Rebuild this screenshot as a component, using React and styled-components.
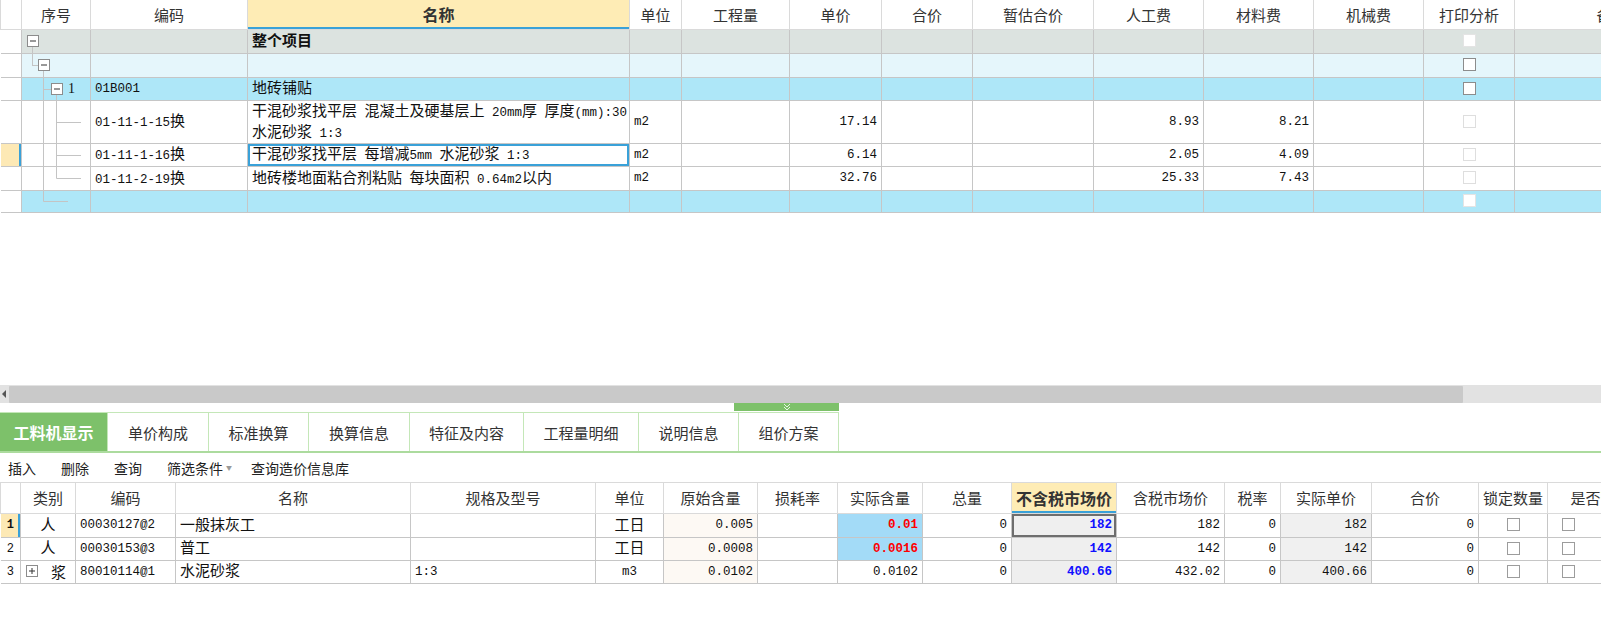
import React from 'react';
import styled, { createGlobalStyle, css } from 'styled-components';

const GlobalStyle = createGlobalStyle`
  html, body { margin: 0; padding: 0; background: #fff; overflow: hidden; }
  body { font-family: "Noto Sans CJK SC", "Liberation Sans", sans-serif; color: #222; }
`;

const Page = styled.div`
  width: 1601px;
  height: 641px;
  display: flex;
  flex-direction: column;
  overflow: hidden;
`;

const TopPane = styled.div`
  height: 385px;
  overflow: hidden;
`;

const Grid = styled.table`
  table-layout: fixed;
  border-collapse: collapse;
  width: ${(p) => p.$w}px;
  font-family: "Liberation Mono", "Noto Sans CJK SC", monospace;
  font-size: 12.5px;
  color: #111;
`;

const Col = styled.col`
  width: ${(p) => p.$w}px;
`;

const HeadRow = styled.tr`
  height: ${(p) => p.$h}px;
`;

const Th = styled.th`
  padding: 0;
  font-family: "Noto Sans CJK SC", sans-serif;
  font-size: ${(p) => (p.$hl ? 16 : 15)}px;
  font-weight: ${(p) => (p.$hl ? 700 : 400)};
  color: #333;
  background: ${(p) => (p.$hl ? '#feecb5' : '#fff')};
  border: 1px solid #dadada;
  border-top: none;
  white-space: nowrap;
  overflow: hidden;
  ${(p) => p.$hl && css`box-shadow: inset 0 -2px 0 #3aa1d8;`}
`;

const Row = styled.tr`
  height: ${(p) => p.$h}px;
  background: ${(p) => p.$bg || '#fff'};
`;

const Td = styled.td`
  padding: 0 4px;
  border: 1px solid #c6c6c6;
  white-space: nowrap;
  overflow: hidden;
  line-height: 18px;
  text-align: ${(p) => p.$align || 'left'};
  background: ${(p) => p.$bg || 'transparent'};
  color: ${(p) => p.$color || '#111'};
  font-weight: ${(p) => (p.$bold ? 700 : 400)};
  ${(p) => p.$sel && css`box-shadow: inset 0 0 0 2px ${p.$sel};`}
`;

const RowHead = styled.td`
  padding: 0;
  border: 1px solid #c6c6c6;
  border-left: none;
  text-align: center;
  font-size: 12px;
  background: ${(p) => (p.$cur ? '#fde9b5' : '#fff')};
  font-weight: ${(p) => (p.$cur ? 700 : 400)};
  ${(p) => p.$cur && css`box-shadow: inset -2px 0 0 #3aa1d8;`}
`;

const TreeTd = styled.td`
  padding: 0;
  border: 1px solid #c6c6c6;
  overflow: hidden;
`;

const TreeWrap = styled.div`
  display: flex;
  align-items: center;
  height: ${(p) => p.$h}px;
  font-family: "Liberation Serif", serif;
  font-size: 14px;
`;

const Han = styled.span`
  font-family: "Noto Sans CJK SC", sans-serif;
  font-size: 15px;
  line-height: 18px;
`;

const Check = styled.span`
  display: inline-block;
  width: 13px;
  height: 13px;
  box-sizing: border-box;
  background: #fff;
  vertical-align: middle;
  margin-left: ${(p) => p.$offset || 0}px;
  border: 1px solid ${(p) => ({ faint: '#e4e4e4', on: '#8c8c8c', light: '#dedede', box: '#9c9c9c' }[p.$tone])};
`;

const KindCell = styled.div`
  display: flex;
  align-items: center;
  gap: 12px;
  padding-left: 1px;
`;

const HScroll = styled.div`
  height: 18px;
  background: #e2e2e2;
  display: flex;
  align-items: center;
`;

const ScrollArrow = styled.span`
  width: 0;
  height: 0;
  margin-left: 2px;
  border-top: 4px solid transparent;
  border-bottom: 4px solid transparent;
  border-right: 4px solid #555;
`;

const Thumb = styled.div`
  margin-left: 3px;
  width: 1454px;
  height: 17px;
  background: #c9c9c9;
  border-radius: 1px;
`;

const Splitter = styled.div`
  height: 9px;
  display: flex;
  align-items: flex-start;
`;

const Handle = styled.div`
  margin-left: 734px;
  width: 105px;
  height: 8px;
  background: #7dc16a;
  display: flex;
  justify-content: center;
`;

const TabBar = styled.div`
  display: flex;
  height: 39px;
  border-bottom: 2px solid #acdb9e;
`;

const Tab = styled.div`
  box-sizing: border-box;
  width: ${(p) => p.$w}px;
  display: flex;
  align-items: center;
  justify-content: center;
  border-top: 1px solid #c4e7b8;
  border-right: 1px solid #c4e7b8;
  font-size: ${(p) => (p.$active ? 16 : 15)}px;
  font-weight: ${(p) => (p.$active ? 700 : 400)};
  background: ${(p) => (p.$active ? '#7dc16a' : '#fff')};
  color: ${(p) => (p.$active ? '#fff' : '#333')};
`;

const Toolbar = styled.div`
  height: 29px;
  display: flex;
  align-items: center;
  gap: 25px;
  padding-left: 8px;
  font-size: 14px;
  color: #222;
`;

const ToolItem = styled.span`
  display: flex;
  align-items: center;
  gap: 3px;
`;

const Caret = styled.span`
  font-size: 6px;
  color: #999;
  margin-right: -6px;
`;

const BottomPane = styled.div`
  overflow: hidden;
  border-top: 1px solid #dadada;
`;

const HAN = /([\u2E80-\u9FFF\uFF00-\uFFEF]+)/;
const Mixed = ({ text }) => text.split(HAN).map((part, i) => (i % 2 ? <Han key={i}>{part}</Han> : part));

const LINE = '#c4c4c4';

function Box({ x, t, plus }) {
  return (
    <g>
      <rect x={x + 0.5} y={t + 0.5} width={11} height={11} fill="#fff" stroke="#8c8c8c" />
      <line x1={x + 3} x2={x + 9} y1={t + 6} y2={t + 6} stroke="#333" />
      {plus && <line x1={x + 6} x2={x + 6} y1={t + 3} y2={t + 9} stroke="#333" />}
    </g>
  );
}

function TreeLines({ kind, h, w }) {
  const c = Math.floor(h / 2) + 0.5;
  const t = Math.floor(h / 2) - 6;
  const V = (x, a, b) => <line x1={x} x2={x} y1={a} y2={b} />;
  const H = (y, a, b) => <line x1={a} x2={b} y1={y} y2={y} />;
  const parts = {
    root: [V(10.5, t + 12, h)],
    group: [V(10.5, 0, c), H(c, 10, 16), V(21.5, t + 12, h)],
    item: [V(21.5, 0, h), H(c, 21, 29), V(34.5, t + 12, h)],
    sub: [V(21.5, 0, h), V(34.5, 0, h), H(c, 34.5, 59)],
    subEnd: [V(21.5, 0, h), V(34.5, 0, c), H(c, 34.5, 59)],
    end: [V(21.5, 0, c), H(c, 21.5, 46)],
  }[kind];
  const boxX = { root: 5, group: 16, item: 29 }[kind];
  return (
    <svg width={w} height={h}>
      <g stroke={LINE}>{parts.map((p, i) => React.cloneElement(p, { key: i }))}</g>
      {boxX !== undefined && <Box x={boxX} t={t} />}
    </svg>
  );
}

const topCols = [21, 69, 157, 382, 52, 108, 92, 91, 121, 110, 110, 110, 91, 194];
const topHeads = ['', '序号', '编码', '名称', '单位', '工程量', '单价', '合价', '暂估合价', '人工费', '材料费', '机械费', '打印分析', '备注'];

const topRows = [
  { h: 24, bg: '#dce3e0', tree: 'root', name: '整个项目', bold: true, check: 'faint' },
  { h: 24, bg: '#e5f6fb', tree: 'group', check: 'on' },
  { h: 23, bg: '#aee7f8', tree: 'item', label: '1', code: '01B001', name: '地砖铺贴', check: 'on' },
  {
    h: 43, tree: 'sub', code: '01-11-1-15换',
    name: ['干混砂浆找平层 混凝土及硬基层上 20mm厚 厚度(mm):30', '水泥砂浆 1:3'],
    unit: 'm2', price: '17.14', labor: '8.93', mat: '8.21', check: 'light',
  },
  { h: 23, tree: 'sub', cur: true, code: '01-11-1-16换', name: '干混砂浆找平层 每增减5mm 水泥砂浆 1:3', unit: 'm2', price: '6.14', labor: '2.05', mat: '4.09', check: 'light' },
  { h: 24, tree: 'subEnd', code: '01-11-2-19换', name: '地砖楼地面粘合剂粘贴 每块面积 0.64m2以内', unit: 'm2', price: '32.76', labor: '25.33', mat: '7.43', check: 'light' },
  { h: 22, bg: '#aee7f8', tree: 'end', check: 'faint' },
];

const tabs = [
  ['工料机显示', 108], ['单价构成', 101], ['标准换算', 100], ['换算信息', 101],
  ['特征及内容', 114], ['工程量明细', 115], ['说明信息', 100], ['组价方案', 100],
];

const botCols = [20, 55, 100, 235, 185, 68, 94, 80, 85, 89, 105, 108, 56, 91, 107, 69, 106];
const botHeads = ['', '类别', '编码', '名称', '规格及型号', '单位', '原始含量', '损耗率', '实际含量', '总量', '不含税市场价', '含税市场价', '税率', '实际单价', '合价', '锁定数量', '是否暂估'];

const botRows = [
  { n: '1', cur: true, h: 24, kind: '人', code: '00030127@2', name: '一般抹灰工', spec: '', unit: '工日', orig: '0.005', real: '0.01', hot: true, total: '0', price: '182', taxed: '182', rate: '0', unitPrice: '182', sum: '0' },
  { n: '2', h: 23, kind: '人', code: '00030153@3', name: '普工', spec: '', unit: '工日', orig: '0.0008', real: '0.0016', hot: true, total: '0', price: '142', taxed: '142', rate: '0', unitPrice: '142', sum: '0' },
  { n: '3', h: 23, kind: '浆', expand: true, code: '80010114@1', name: '水泥砂浆', spec: '1:3', unit: 'm3', orig: '0.0102', real: '0.0102', total: '0', price: '400.66', taxed: '432.02', rate: '0', unitPrice: '400.66', sum: '0' },
];

function TopGrid() {
  return (
    <Grid $w={topCols.reduce((a, b) => a + b, 0)}>
      <colgroup>
        {topCols.map((w, i) => <Col key={i} $w={w} />)}
      </colgroup>
      <thead>
        <HeadRow $h={29}>
          {topHeads.map((t, i) => <Th key={i} $hl={t === '名称'}>{t}</Th>)}
        </HeadRow>
      </thead>
      <tbody>
        {topRows.map((r, i) => (
          <Row key={i} $h={r.h} $bg={r.bg}>
            <RowHead $cur={r.cur} />
            <TreeTd>
              <TreeWrap $h={r.h - 1}>
                <TreeLines kind={r.tree} h={r.h - 1} w={r.label ? 46 : 68} />
                {r.label}
              </TreeWrap>
            </TreeTd>
            <Td>{r.code && <Mixed text={r.code} />}</Td>
            <Td $bold={r.bold} $sel={r.cur ? '#3aa1d8' : undefined}>
              {Array.isArray(r.name)
                ? r.name.map((l, k) => <React.Fragment key={k}>{k > 0 && <br />}<Mixed text={l} /></React.Fragment>)
                : r.name && <Mixed text={r.name} />}
            </Td>
            <Td>{r.unit}</Td>
            <Td />
            <Td $align="right">{r.price}</Td>
            <Td />
            <Td />
            <Td $align="right">{r.labor}</Td>
            <Td $align="right">{r.mat}</Td>
            <Td />
            <Td $align="center"><Check $tone={r.check} /></Td>
            <Td />
          </Row>
        ))}
      </tbody>
    </Grid>
  );
}

function BottomGrid() {
  return (
    <Grid $w={botCols.reduce((a, b) => a + b, 0)}>
      <colgroup>
        {botCols.map((w, i) => <Col key={i} $w={w} />)}
      </colgroup>
      <thead>
        <HeadRow $h={30}>
          {botHeads.map((t, i) => <Th key={i} $hl={t === '不含税市场价'}>{t}</Th>)}
        </HeadRow>
      </thead>
      <tbody>
        {botRows.map((r, i) => (
          <Row key={i} $h={r.h}>
            <RowHead $cur={r.cur}>{r.n}</RowHead>
            <Td $align="center">
              {r.expand ? (
                <KindCell>
                  <svg width={13} height={13}><Box x={0} t={0} plus /></svg>
                  <Han>{r.kind}</Han>
                </KindCell>
              ) : <Han>{r.kind}</Han>}
            </Td>
            <Td>{r.code}</Td>
            <Td><Mixed text={r.name} /></Td>
            <Td>{r.spec}</Td>
            <Td $align="center"><Mixed text={r.unit} /></Td>
            <Td $align="right" $bg="#fdf9f4">{r.orig}</Td>
            <Td />
            <Td $align="right" $bg={r.hot ? '#a3dbf7' : undefined} $color={r.hot ? '#f00' : undefined} $bold={r.hot}>{r.real}</Td>
            <Td $align="right">{r.total}</Td>
            <Td $align="right" $bg="#efefef" $color="#1010ff" $bold $sel={r.cur ? '#6e6e6e' : undefined}>{r.price}</Td>
            <Td $align="right">{r.taxed}</Td>
            <Td $align="right">{r.rate}</Td>
            <Td $align="right" $bg="#f0f0f0">{r.unitPrice}</Td>
            <Td $align="right">{r.sum}</Td>
            <Td $align="center"><Check $tone="box" /></Td>
            <Td><Check $tone="box" $offset={10} /></Td>
          </Row>
        ))}
      </tbody>
    </Grid>
  );
}

export default function App() {
  return (
    <Page>
      <GlobalStyle />
      <TopPane>
        <TopGrid />
      </TopPane>
      <HScroll>
        <ScrollArrow />
        <Thumb />
      </HScroll>
      <Splitter>
        <Handle>
          <svg width={10} height={8}>
            <polyline points="2,1 5,4 8,1" fill="none" stroke="#e8f5e2" />
            <polyline points="2,4 5,7 8,4" fill="none" stroke="#e8f5e2" />
          </svg>
        </Handle>
      </Splitter>
      <TabBar>
        {tabs.map(([t, w], i) => <Tab key={t} $w={w} $active={i === 0}>{t}</Tab>)}
      </TabBar>
      <Toolbar>
        <ToolItem>插入</ToolItem>
        <ToolItem>删除</ToolItem>
        <ToolItem>查询</ToolItem>
        <ToolItem>筛选条件<Caret>▼</Caret></ToolItem>
        <ToolItem>查询造价信息库</ToolItem>
      </Toolbar>
      <BottomPane>
        <BottomGrid />
      </BottomPane>
    </Page>
  );
}
